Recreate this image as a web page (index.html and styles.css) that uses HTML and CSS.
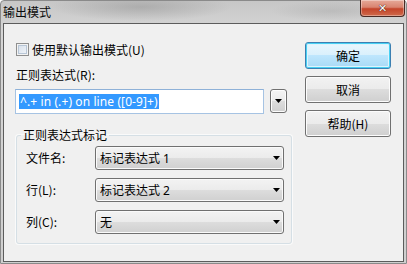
FILE: index.html
```html
<!DOCTYPE html>
<html lang="zh-CN">
<head>
<meta charset="utf-8">
<link rel="stylesheet" href="styles.css">
</head>
<body>
<div class="window">
  <div class="titlebar">
    <span class="title">输出模式</span>
    <div class="close"><span>✕</span></div>
  </div>
  <div class="client">
    <div class="main">
      <label class="check-row"><span class="checkbox"></span><span>使用默认输出模式(U)</span></label>
      <div class="field-label">正则表达式(R):</div>
      <div class="input-row">
        <div class="input"><span class="sel">^.+ in (.+) on line ([0-9]+)</span></div>
        <div class="menu-btn"><svg width="7" height="4" viewBox="0 0 7 4"><path d="M0 0H7L3.5 4Z" fill="#000"/></svg></div>
      </div>
      <fieldset class="group">
        <legend>正则表达式标记</legend>
        <div class="rows">
          <span class="row-label">文件名:</span>
          <div class="combo"><span>标记表达式 1</span><svg width="7" height="4" viewBox="0 0 7 4"><path d="M0 0H7L3.5 4Z" fill="#000"/></svg></div>
          <span class="row-label">行(L):</span>
          <div class="combo"><span>标记表达式 2</span><svg width="7" height="4" viewBox="0 0 7 4"><path d="M0 0H7L3.5 4Z" fill="#000"/></svg></div>
          <span class="row-label">列(C):</span>
          <div class="combo"><span>无</span><svg width="7" height="4" viewBox="0 0 7 4"><path d="M0 0H7L3.5 4Z" fill="#000"/></svg></div>
        </div>
      </fieldset>
    </div>
    <div class="side">
      <div class="btn default">确定</div>
      <div class="btn">取消</div>
      <div class="btn">帮助(H)</div>
    </div>
  </div>
</div>
</body>
</html>
```

FILE: styles.css
```css
html, body {
  margin: 0;
  padding: 0;
}
body {
  width: 407px;
  height: 264px;
  overflow: hidden;
  font-family: "Noto Sans", "Noto Sans CJK SC", sans-serif;
  font-size: 12px;
  color: #000;
}
.window {
  width: 407px;
  height: 264px;
  box-sizing: border-box;
  border: 1px solid #8a8a8a;
  border-radius: 4px 4px 0 0;
  background:
    radial-gradient(ellipse 90px 14px at 140px 6px, rgba(120,120,120,0.35), rgba(120,120,120,0)),
    radial-gradient(ellipse 60px 10px at 330px 10px, rgba(140,140,140,0.25), rgba(140,140,140,0)),
    linear-gradient(#c7c7c7, #d6d6d6 30px, #cfcfcf);
  display: flex;
  flex-direction: column;
}
.titlebar {
  height: 22px;
  position: relative;
  display: flex;
  align-items: center;
  padding-left: 2px;
}
.title {
  font-family: "Noto Sans CJK SC", sans-serif;
  font-size: 12px;
  line-height: 14px;
  color: #0a0a0a;
}
.close {
  position: absolute;
  top: -1px;
  right: 1px;
  width: 45px;
  height: 17px;
  box-sizing: border-box;
  border: 1px solid #4a2a24;
  border-top: none;
  border-radius: 0 0 4px 4px;
  background: linear-gradient(#e6a999, #d98470 45%, #c4442a 55%, #cf6a4b);
  display: flex;
  align-items: center;
  justify-content: center;
  box-shadow: inset 0 0 0 1px rgba(255,255,255,0.35);
}
.close span {
  color: #fff;
  font-family: "DejaVu Sans", sans-serif;
  font-size: 11px;
  font-weight: bold;
  line-height: 11px;
  text-shadow: 0 0 1px #3a1a10, 0 0 1px #3a1a10;
}
.client {
  margin: 0 2px 1px 2px;
  flex: 1;
  border: 1px solid #5c5c5c;
  background: #f0f0f0;
  display: flex;
  padding: 17px 0 0 11px;
}
.main {
  width: 277px;
  display: flex;
  flex-direction: column;
}
.check-row {
  display: flex;
  align-items: center;
  height: 16px;
  padding-left: 1px;
  gap: 3px;
  font-family: "Noto Sans CJK SC", sans-serif;
}
.checkbox {
  width: 13px;
  height: 13px;
  box-sizing: border-box;
  border: 1px solid #8f8f8f;
  background: linear-gradient(135deg, #d3dde9, #f4f7fb);
  box-shadow: inset 0 0 0 1px #f3f3f3, inset 0 0 0 2px #b8c6d6;
}
.field-label {
  margin-top: 10px;
  height: 16px;
  line-height: 16px;
  padding-left: 1px;
  font-family: "Noto Sans CJK SC", sans-serif;
}
.input-row {
  margin-top: 6px;
  display: flex;
  align-items: flex-start;
  gap: 6px;
}
.input {
  width: 249px;
  height: 25px;
  box-sizing: border-box;
  border: 1px solid #a6c3e3;
  border-top-color: #8eb1d8;
  background: #fff;
  display: flex;
  align-items: center;
  padding-left: 3px;
}
.sel {
  background: #3399ff;
  color: #fff;
  line-height: 15px;
  font-size: 12px;
  padding: 0 1px;
  letter-spacing: 0.1px;
}
.menu-btn {
  width: 17px;
  height: 24px;
  box-sizing: border-box;
  border: 1px solid #707070;
  border-radius: 3px;
  background: linear-gradient(#f4f4f4, #ebebeb 50%, #dddddd 50%, #cfcfcf);
  box-shadow: inset 0 0 0 1px #fcfcfc;
  display: flex;
  align-items: center;
  justify-content: center;
}
.group {
  margin: 13px 0 0 1px;
  width: 276px;
  box-sizing: border-box;
  padding: 3px 7px 9px 9px;
  border: 1px solid #d5dfe5;
  border-radius: 3px;
  box-shadow: 0 0 0 1px #fafafa;
  min-inline-size: 0;
}
.group legend {
  margin-left: -5px;
  padding: 0 2px;
  line-height: 16px;
  font-family: "Noto Sans CJK SC", sans-serif;
}
.rows {
  display: grid;
  grid-template-columns: 69px 189px;
  grid-auto-rows: 24px;
  row-gap: 8px;
  align-items: center;
}
.row-label {
  font-family: "Noto Sans CJK SC", sans-serif;
  align-self: start;
  margin-top: 3px;
}
.combo {
  height: 24px;
  box-sizing: border-box;
  border: 1px solid #707070;
  border-radius: 3px;
  background: linear-gradient(#f3f3f3, #ebebeb 50%, #dddddd 50%, #d0d0d0);
  box-shadow: inset 0 0 0 1px #fafafa;
  display: flex;
  align-items: center;
  justify-content: space-between;
  padding: 0 3px 0 4px;
  font-family: "Noto Sans", "Noto Sans CJK SC", sans-serif;
}
.side {
  margin-left: 13px;
  margin-top: 1px;
  width: 86px;
  display: flex;
  flex-direction: column;
  gap: 7px;
}
.btn {
  height: 27px;
  box-sizing: border-box;
  border: 1px solid #707070;
  border-radius: 3px;
  background: linear-gradient(#f2f2f2, #ebebeb 50%, #dddddd 50%, #cfcfcf);
  box-shadow: inset 0 0 0 1px #fcfcfc;
  display: flex;
  align-items: center;
  justify-content: center;
  font-family: "Noto Sans CJK SC", sans-serif;
}
.btn.default {
  border-color: #3c7fb1;
  background: linear-gradient(#eaf6fd, #d9f0fc 50%, #bee6fd 50%, #a7d9f5);
  box-shadow: inset 0 0 0 1px #48d0f3, inset 0 0 0 2px #def3fc;
}
```
